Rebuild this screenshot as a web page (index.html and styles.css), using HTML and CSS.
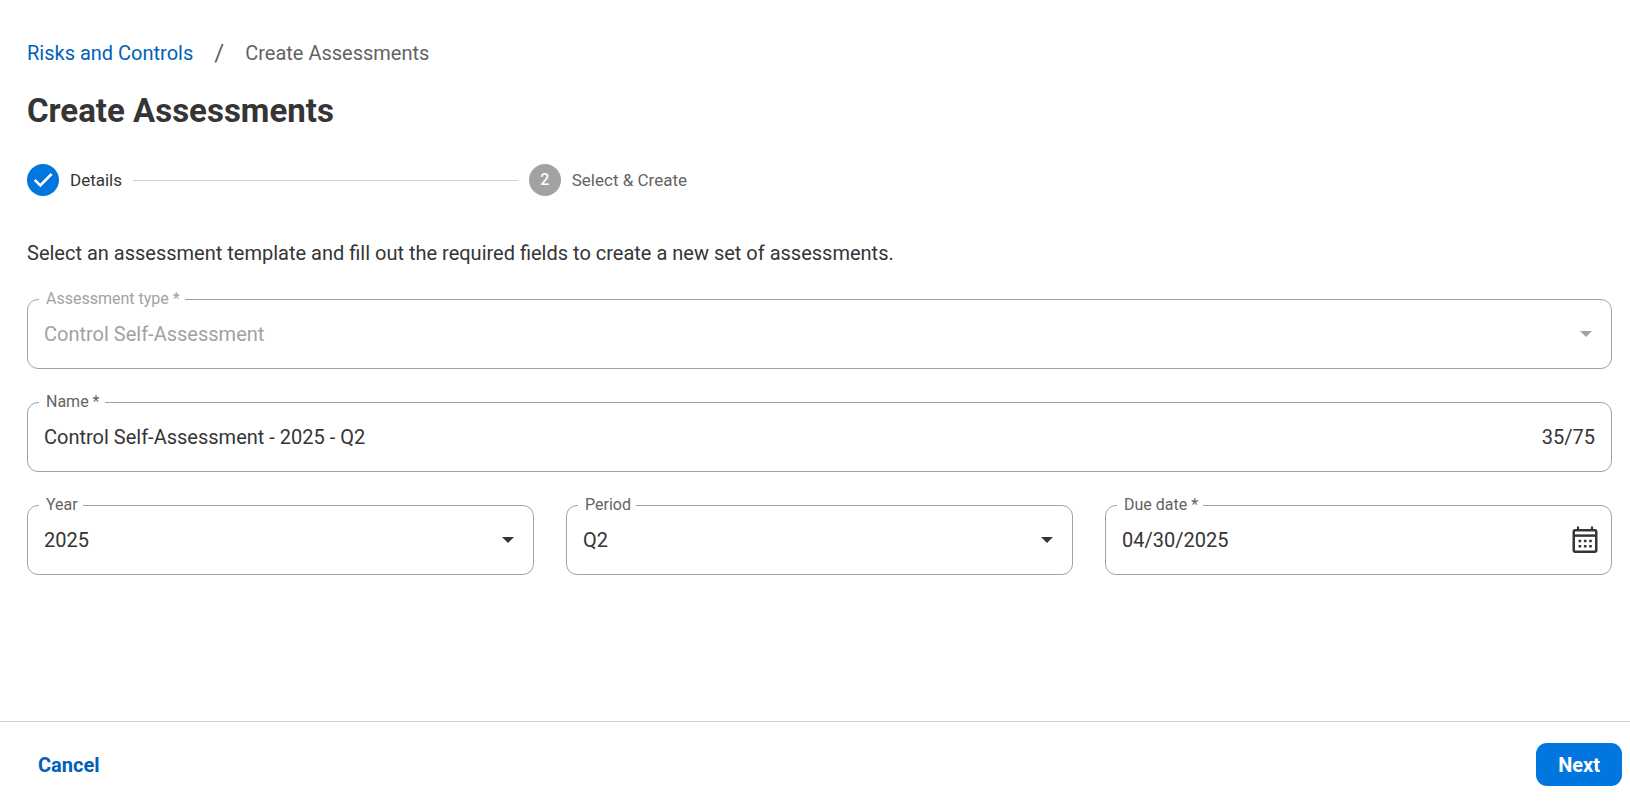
FILE: index.html
```
<!DOCTYPE html>
<html lang="en">
<head>
  <meta charset="UTF-8">
  <meta name="viewport" content="width=device-width, initial-scale=1.0">
  <title>Create Assessments</title>
  <link rel="stylesheet" href="styles.css">
</head>
<body>
  <main class="content">
    <nav class="breadcrumb" aria-label="Breadcrumb">
      <a href="#">Risks and Controls</a>
      <span class="separator">/</span>
      <span>Create Assessments</span>
    </nav>

    <h1>Create Assessments</h1>

    <ol class="stepper">
      <li class="step active">
        <span class="step-icon">
          <svg width="32" height="32" viewBox="0 0 32 32" fill="none" stroke="#fff" stroke-width="2.6">
            <path d="M7.7 15.8l5.6 5.6L24.6 10"/>
          </svg>
        </span>
        <span>Details</span>
      </li>
      <li class="step-line" aria-hidden="true"></li>
      <li class="step">
        <span class="step-icon">2</span>
        <span>Select &amp; Create</span>
      </li>
    </ol>

    <p class="intro">Select an assessment template and fill out the required fields to create a new set of assessments.</p>

    <form id="assessment-form" class="form">
      <div class="field disabled">
        <label for="type">Assessment type *</label>
        <select id="type" disabled>
          <option>Control Self-Assessment</option>
        </select>
        <svg class="caret" width="12" height="6" viewBox="0 0 12 6"><path d="M0 0h12L6 6z" fill="currentColor"/></svg>
      </div>

      <div class="field">
        <label for="name">Name *</label>
        <input id="name" type="text" maxlength="75" value="Control Self-Assessment - 2025 - Q2">
        <span class="counter">35/75</span>
      </div>

      <div class="field-row">
        <div class="field">
          <label for="year">Year</label>
          <select id="year">
            <option>2025</option>
          </select>
          <svg class="caret" width="12" height="6" viewBox="0 0 12 6"><path d="M0 0h12L6 6z" fill="currentColor"/></svg>
        </div>
        <div class="field">
          <label for="period">Period</label>
          <select id="period">
            <option>Q2</option>
          </select>
          <svg class="caret" width="12" height="6" viewBox="0 0 12 6"><path d="M0 0h12L6 6z" fill="currentColor"/></svg>
        </div>
        <div class="field">
          <label for="due-date">Due date *</label>
          <input id="due-date" type="text" value="04/30/2025">
          <button type="button" class="calendar" aria-label="Choose date">
            <svg width="26" height="28" viewBox="0 0 26 28" fill="none" stroke="#353535">
              <rect x="1.75" y="4.2" width="22.5" height="21.6" rx="1.5" stroke-width="2.5"/>
              <path d="M1 9.6h24" stroke-width="2.5"/>
              <path d="M6 0.6v3M20 0.6v3" stroke-width="2.2"/>
              <path d="M6.6 15h2.6M11.9 15h2.6M17.2 15h2.6M6.6 20.3h2.6M11.9 20.3h2.6M17.2 20.3h2.6" stroke-width="2.6"/>
            </svg>
          </button>
        </div>
      </div>
    </form>
  </main>

  <footer class="footer">
    <button type="button" class="btn btn-text">Cancel</button>
    <button type="submit" form="assessment-form" class="btn btn-primary">Next</button>
  </footer>
</body>
</html>
```

FILE: styles.css
```
* {
  box-sizing: border-box;
}
body {
  margin: 0;
  min-height: 100vh;
  display: flex;
  flex-direction: column;
  font-family: Roboto, Arial, sans-serif;
  font-size: 20px;
  line-height: 28px;
  color: #353535;
  background-color: #fff;
}
.content {
  flex: 1;
  padding: 39px 18px 32px 27px;
}

/* Breadcrumb and title */
.breadcrumb {
  display: flex;
  gap: 21px;
  color: #636363;
}
.breadcrumb a {
  color: #0061ba;
  text-decoration: none;
}
.separator {
  font-size: 24px;
}
h1 {
  margin: 24px 0 33px;
  font-size: 33px;
  line-height: 40px;
  font-weight: 700;
}

/* Stepper */
.stepper {
  list-style: none;
  display: flex;
  align-items: center;
  gap: 11px;
  max-width: 660px;
  margin: 0 0 43px;
  padding: 0;
  font-size: 17px;
}
.step {
  display: flex;
  align-items: center;
  gap: 11px;
  color: #636363;
}
.step.active {
  color: #353535;
}
.step-icon {
  width: 32px;
  height: 32px;
  display: flex;
  align-items: center;
  justify-content: center;
  border-radius: 50%;
  background-color: #a2a2a2;
  color: #fff;
  font-size: 16px;
  font-weight: 500;
}
.active .step-icon {
  background-color: #0076de;
}
.step-line {
  flex: 1;
  height: 1px;
  background-color: #d2d2d2;
}
.intro {
  margin: 0 0 32px;
}

/* Form fields */
.form {
  display: flex;
  flex-direction: column;
  gap: 33px;
}
.field-row {
  display: grid;
  grid-template-columns: repeat(3, 1fr);
  gap: 32px;
}
.field {
  position: relative;
  display: flex;
  align-items: center;
  height: 70px;
  padding: 0 16px;
  border: 1px solid #a2a2a2;
  border-radius: 11px;
}
/* label sits on top of the border */
.field label {
  position: absolute;
  top: -11px;
  left: 11px;
  padding: 0 5px 0 7px;
  background-color: #fff;
  font-size: 16px;
  line-height: 20px;
  color: #636363;
}
.field input,
.field select {
  flex: 1;
  min-width: 0;
  height: 100%;
  padding: 0;
  border: none;
  outline: none;
  appearance: none;
  background: none;
  font: inherit;
  color: inherit;
  opacity: 1;
}
.field.disabled,
.field.disabled label {
  color: #a2a2a2;
}
.caret {
  margin-right: 3px;
}
.calendar {
  display: flex;
  padding: 0;
  margin-right: -3px;
  border: none;
  background: none;
  cursor: pointer;
}

/* Footer */
.footer {
  display: flex;
  justify-content: space-between;
  align-items: center;
  padding: 21px 8px 18px 16px;
  border-top: 1px solid #d2d2d2;
}
.btn {
  height: 43px;
  padding: 0 22px;
  border: none;
  border-radius: 11px;
  font: inherit;
  font-weight: 700;
  cursor: pointer;
}
.btn-text {
  background: none;
  color: #0061ba;
}
.btn-primary {
  background-color: #0076de;
  color: #fff;
}
```
